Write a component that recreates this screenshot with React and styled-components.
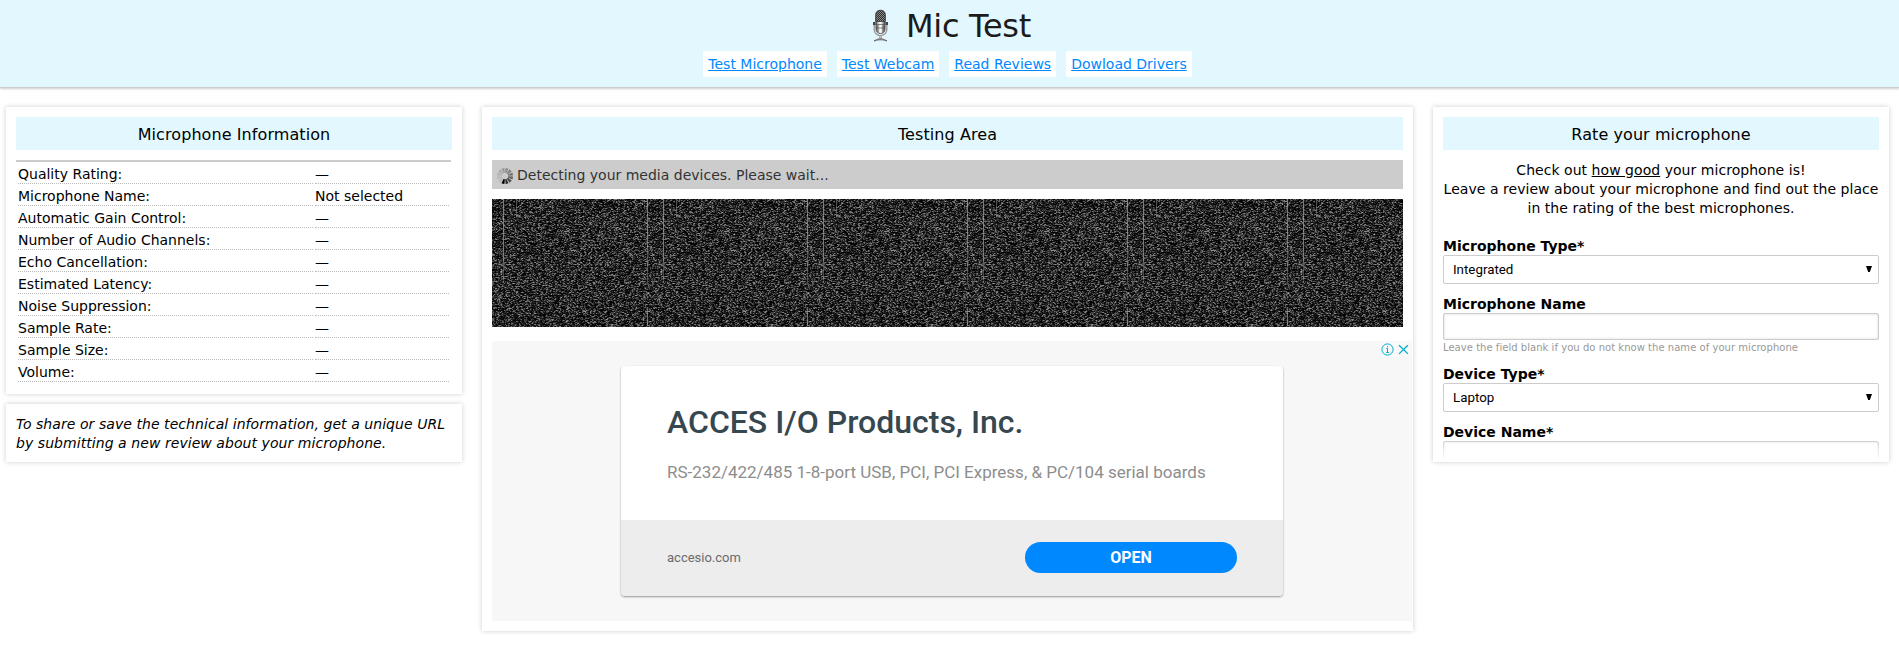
import React, { useEffect, useRef } from "react";
import styled, { createGlobalStyle, css } from "styled-components";

const GlobalStyle = createGlobalStyle`
  * {
    box-sizing: border-box;
  }

  body {
    margin: 0;
    background: #fff;
    color: #000;
    font-family: Verdana, "DejaVu Sans", sans-serif;
    font-size: 14px;
    line-height: 19px;
  }
`;

const Page = styled.div`
  min-height: 645px;
`;

const Header = styled.header`
  height: 88px;
  padding-top: 6px;
  background: #e3f7ff;
  border-bottom: 1px solid #ccc;
  box-shadow: 0 1px 2px rgba(0, 0, 0, 0.2);
`;

const Brand = styled.h1`
  display: flex;
  justify-content: center;
  gap: 18px;
  height: 45px;
  margin: 0;
  padding-left: 5px;
  color: #1b1b1b;
  font-size: 32px;
  font-weight: normal;
  letter-spacing: -0.3px;
  line-height: 41px;

  svg {
    margin-top: 3px;
  }
`;

const Nav = styled.nav`
  display: flex;
  justify-content: center;
  gap: 10px;
  padding-right: 4px;
`;

const NavLink = styled.a`
  height: 26px;
  padding: 0 5px;
  background: #fff;
  border-radius: 2px;
  color: #0088ff;
  line-height: 26px;
`;

const Columns = styled.main`
  display: grid;
  grid-template-columns: 456px 931px 456px;
  gap: 20px;
  align-items: start;
  padding: 19px 0 0 6px;
`;

const SideColumn = styled.div`
  display: flex;
  flex-direction: column;
  gap: 10px;
`;

const Panel = styled.section`
  height: ${(p) => p.$height}px;
  padding: 10px;
  background: #fff;
  box-shadow: 0 0 5px rgba(0, 0, 0, 0.2);
  overflow: hidden;
`;

const PanelTitle = styled.h2`
  height: 33px;
  margin: 0 0 10px;
  background: #e3f7ff;
  font-size: 16px;
  font-weight: normal;
  letter-spacing: 0.08px;
  line-height: 35px;
  text-align: center;
`;

const InfoTable = styled.table`
  width: 435px;
  border-top: 2px solid #ccc;
  border-spacing: 2px;
  border-collapse: separate;
`;

const Cell = styled.td`
  width: ${(p) => p.$width}px;
  height: 20px;
  padding: 1px 0 0;
  border-bottom: 1px dotted #bbb;
  line-height: 18px;
`;

const Note = styled.p`
  margin: 1px 0 0;
  font-style: italic;
  letter-spacing: 0.06px;
  white-space: nowrap;
`;

const Status = styled.div`
  display: flex;
  align-items: center;
  gap: 4px;
  height: 29px;
  margin-bottom: 10px;
  padding: 2px 0 0 5px;
  background: #ccc;
  color: #333;
`;

const NoiseCanvas = styled.canvas`
  display: block;
  width: 911px;
  height: 128px;
  background: #000;
`;

const AdArea = styled.div`
  position: relative;
  display: flex;
  justify-content: center;
  width: 920px;
  height: 280px;
  margin-top: 14px;
  padding-top: 25px;
  background: #f7f7f7;
  font-family: Roboto, sans-serif;
`;

const AdCorner = styled.div`
  position: absolute;
  top: 1px;
  right: 0;
  display: flex;
  gap: 1px;
  background: #fff;

  svg {
    display: block;
    background: #f9f9f9;
  }
`;

const AdCard = styled.article`
  width: 662px;
  height: 230px;
  border-radius: 4px;
  background: #fff;
  box-shadow: 0 1px 2px rgba(0, 0, 0, 0.4);
  overflow: hidden;
`;

const AdBody = styled.div`
  height: 154px;
  padding: 36px 46px 0;
`;

const AdTitle = styled.h3`
  margin: 0;
  color: #37474f;
  font-size: 32px;
  font-weight: 500;
  line-height: 40px;
  white-space: nowrap;
`;

const AdText = styled.p`
  margin: 19px 0 0;
  color: #8d8d8d;
  font-size: 17px;
  line-height: 22px;
  white-space: nowrap;
`;

const AdFooter = styled.footer`
  display: flex;
  align-items: center;
  justify-content: space-between;
  height: 76px;
  padding: 0 46px 1px;
  background: #ededed;
  color: #6b6b6b;
  font-size: 13px;
`;

const OpenButton = styled.button`
  width: 212px;
  height: 31px;
  padding: 0;
  border: 0;
  border-radius: 16px;
  background: #0088ff;
  color: #fff;
  font-family: Roboto, sans-serif;
  font-size: 16px;
  font-weight: 700;
`;

const Intro = styled.p`
  margin: 11px -5px 19px;
  letter-spacing: 0.04px;
  text-align: center;
  white-space: nowrap;
`;

const FormPanel = styled(Panel)`
  position: relative;

  &::after {
    content: "";
    position: absolute;
    right: 0;
    bottom: 0;
    left: 0;
    height: 23px;
    background: linear-gradient(rgba(255, 255, 255, 0), #fff 90%);
  }
`;

const Field = styled.div`
  margin-bottom: ${(p) => p.$gap || 11}px;
`;

const Label = styled.label`
  display: block;
  height: 18px;
  font-weight: bold;
`;

const control = css`
  display: flex;
  width: 100%;
  border: 1px solid #ccc;
  border-radius: 2px;
  background: #fff;
`;

const Select = styled.div`
  ${control}
  align-items: center;
  justify-content: space-between;
  height: 29px;
  padding: 0 6px 0 9px;
  font-family: Roboto, sans-serif;
  font-size: 13.33px;

  svg {
    margin-bottom: 1px;
  }
`;

const Input = styled.input`
  ${control}
  height: 27px;
  padding: 0 10px;
  box-shadow: inset 0 0 3px rgba(0, 0, 0, 0.15);
`;

const Hint = styled.small`
  display: block;
  height: 19px;
  color: #999;
  font-size: 10px;
  letter-spacing: 0.035px;
  line-height: 15px;
`;

const MicIcon = () => (
  <svg width="15" height="33" viewBox="0 0 15 33">
    <defs>
      <linearGradient id="metal">
        <stop offset="0" stopColor="#555" />
        <stop offset="0.3" stopColor="#ddd" />
        <stop offset="0.55" stopColor="#fff" />
        <stop offset="1" stopColor="#444" />
      </linearGradient>
      <linearGradient id="base" x2="0" y2="1">
        <stop offset="0" stopColor="#ccc" />
        <stop offset="1" stopColor="#555" />
      </linearGradient>
      <pattern id="mesh" width="2" height="2" patternUnits="userSpaceOnUse">
        <rect width="2" height="2" fill="#333" />
        <path d="M0 0h1v1H0zM1 1h1v1H1z" fill="#888" />
      </pattern>
    </defs>
    <path d="M1.2 15v5.5a6.2 6 0 0 0 12.6 0V15" fill="none" stroke="#999" strokeWidth="1.4" />
    <rect x="3" y="1.5" width="9" height="23" rx="4.5" fill="url(#metal)" stroke="#555" />
    <path d="M2.7 12.5V6q0-4.8 4.8-4.8T12.3 6v6.5z" fill="url(#mesh)" stroke="#333" strokeWidth="0.7" />
    <path d="M0 13h2.5v3H0zM12.5 13H15v3h-2.5z" fill="#444" />
    <path d="M2.5 15.5h10M5 16v7M10 16v7M3 19h9" stroke="#555" strokeWidth="0.7" />
    <path d="M6 27h3v2l5 2.3v1.2q-6.5-2.4-13 0v-1.2L6 29z" fill="url(#base)" />
  </svg>
);

const spokes = ["#8d8d8d", "#808080", "#737373", "#606060", "#4a4a4a", "#303030", "#000", "#bbb", "#b8b8b8", "#b4b4b4", "#aaa", "#999"];

const Spinner = () => (
  <svg width="16" height="16" viewBox="0 0 16 16">
    {spokes.map((color, i) => (
      <path
        key={i}
        d="M6.5 0h3l-.8 4.8H7.3z"
        fill={color}
        transform={`rotate(${i * 30 + 15} 8 8)`}
      />
    ))}
  </svg>
);

// Static noise tile, repeated every 160px
const Noise = () => {
  const ref = useRef(null);

  useEffect(() => {
    const ctx = ref.current.getContext("2d");
    const image = ctx.createImageData(160, 128);
    let seed = 7;
    const random = () => {
      seed = (seed * 1664525 + 1013904223) % 4294967296;
      return seed / 4294967296;
    };
    let last = 0;
    for (let i = 0; i < image.data.length; i += 4) {
      const next = Math.pow(random(), 2.6) * 160;
      const v = next * 0.75 + last * 0.25;
      last = next;
      image.data[i] = v;
      image.data[i + 1] = v;
      image.data[i + 2] = v;
      image.data[i + 3] = 255;
    }
    const tile = document.createElement("canvas");
    tile.width = 160;
    tile.height = 128;
    const tileCtx = tile.getContext("2d");
    tileCtx.putImageData(image, 0, 0);
    tileCtx.fillStyle = "rgba(170, 170, 170, 0.65)";
    tileCtx.fillRect(155, 0, 1, 48);
    tileCtx.fillRect(155, 112, 1, 15);
    tileCtx.fillRect(11, 0, 1, 63);
    tileCtx.fillStyle = "rgba(140, 140, 140, 0.5)";
    tileCtx.fillRect(155, 48, 1, 37);
    tileCtx.fillRect(11, 63, 1, 20);
    tileCtx.fillRect(24, 0, 1, 18);
    ctx.fillStyle = ctx.createPattern(tile, "repeat");
    ctx.fillRect(0, 0, 911, 128);
  }, []);

  return <NoiseCanvas ref={ref} width={911} height={128} />;
};

const links = ["Test Microphone", "Test Webcam", "Read Reviews", "Dowload Drivers"];

const info = [
  ["Quality Rating:", "—"],
  ["Microphone Name:", "Not selected"],
  ["Automatic Gain Control:", "—"],
  ["Number of Audio Channels:", "—"],
  ["Echo Cancellation:", "—"],
  ["Estimated Latency:", "—"],
  ["Noise Suppression:", "—"],
  ["Sample Rate:", "—"],
  ["Sample Size:", "—"],
  ["Volume:", "—"],
];

const Arrow = () => (
  <svg width="6" height="6" viewBox="0 0 6 6">
    <path d="M0 0h6L3.8 6H2.2z" />
  </svg>
);

const App = () => (
  <Page>
    <GlobalStyle />
    <Header>
      <Brand>
        <MicIcon />
        <span>Mic Test</span>
      </Brand>
      <Nav>
        {links.map((link) => (
          <NavLink key={link} href="#">
            {link}
          </NavLink>
        ))}
      </Nav>
    </Header>
    <Columns>
      <SideColumn>
        <Panel $height={287}>
          <PanelTitle>Microphone Information</PanelTitle>
          <InfoTable>
            <tbody>
              {info.map(([name, value]) => (
                <tr key={name}>
                  <Cell $width={295}>{name}</Cell>
                  <Cell $width={134}>{value}</Cell>
                </tr>
              ))}
            </tbody>
          </InfoTable>
        </Panel>
        <Panel $height={58}>
          <Note>
            To share or save the technical information, get a unique URL
            <br />
            by submitting a new review about your microphone.
          </Note>
        </Panel>
      </SideColumn>
      <Panel $height={524}>
        <PanelTitle>Testing Area</PanelTitle>
        <Status>
          <Spinner />
          <span>Detecting your media devices. Please wait...</span>
        </Status>
        <Noise />
        <AdArea>
          <AdCorner>
            <svg width="15" height="15" viewBox="0 0 15 15" fill="none" stroke="#00aecd">
              <circle cx="7.5" cy="7.5" r="5.6" />
              <path d="M7.5 6.4v4.2M6.3 6.5h1.5M6.2 10.5h2.6M7.5 4v1.3" />
            </svg>
            <svg width="16" height="15" viewBox="0 0 16 15" fill="none" stroke="#00aecd" strokeWidth="1.3">
              <path d="M3 3.3l9 8.6M12 3.3l-9 8.6" />
            </svg>
          </AdCorner>
          <AdCard>
            <AdBody>
              <AdTitle>ACCES I/O Products, Inc.</AdTitle>
              <AdText>RS-232/422/485 1-8-port USB, PCI, PCI Express, &amp; PC/104 serial boards</AdText>
            </AdBody>
            <AdFooter>
              <span>accesio.com</span>
              <OpenButton>OPEN</OpenButton>
            </AdFooter>
          </AdCard>
        </AdArea>
      </Panel>
      <FormPanel $height={355}>
        <PanelTitle>Rate your microphone</PanelTitle>
        <Intro>
          Check out <u>how good</u> your microphone is!
          <br />
          Leave a review about your microphone and find out the place
          <br />
          in the rating of the best microphones.
        </Intro>
        <Field>
          <Label>Microphone Type*</Label>
          <Select>
            Integrated
            <Arrow />
          </Select>
        </Field>
        <Field $gap={6}>
          <Label>Microphone Name</Label>
          <Input />
          <Hint>Leave the field blank if you do not know the name of your microphone</Hint>
        </Field>
        <Field>
          <Label>Device Type*</Label>
          <Select>
            Laptop
            <Arrow />
          </Select>
        </Field>
        <Field>
          <Label>Device Name*</Label>
          <Input />
        </Field>
      </FormPanel>
    </Columns>
  </Page>
);

export default App;
